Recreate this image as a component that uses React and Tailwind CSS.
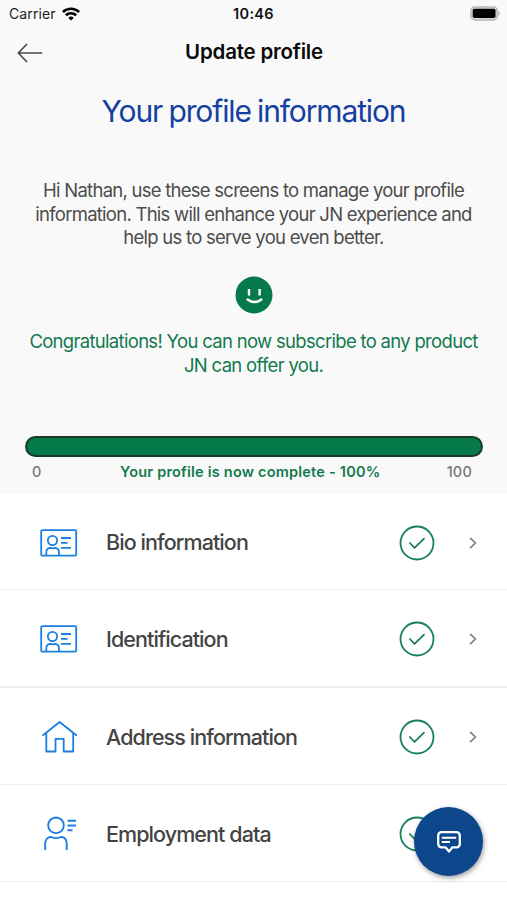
function WifiIcon() {
  return (
    <svg viewBox="0 0 18 14" className="h-[14px] w-[18px]" fill="none" stroke="#000" strokeWidth="2.6">
      <path d="M.9 5a11.6 11.6 0 0 1 16.2 0" />
      <path d="M3.9 8.3a7.3 7.3 0 0 1 10.2 0" />
      <path d="M9 13.6 6.3 10.9a3.9 3.9 0 0 1 5.4 0z" fill="#000" stroke="none" />
    </svg>
  );
}

function BatteryIcon() {
  return (
    <svg viewBox="0 0 31 15" className="h-[15px] w-[31px]">
      <rect x=".9" y=".9" width="26.4" height="13" rx="4" fill="#d8d8d8" stroke="#b8b8b8" strokeWidth="1.5" />
      <rect x="2.7" y="2.7" width="22.8" height="9.4" rx="1.8" fill="#000" />
      <path d="M28.4 5v4.8c2-.7 2-4.1 0-4.8z" fill="#b4b4b4" />
    </svg>
  );
}

function BackIcon() {
  return (
    <svg
      viewBox="0 0 26 20"
      className="h-[20px] w-[26px]"
      fill="none"
      stroke="#4a4a4a"
      strokeWidth="1.7"
      strokeLinecap="round"
      strokeLinejoin="round"
    >
      <path d="M9.5 1.5 1.3 10l8.2 8.5M1.3 10h23.2" />
    </svg>
  );
}

function SmileIcon() {
  return (
    <svg viewBox="0 0 38 38" className="h-[38px] w-[38px]" fill="none" stroke="#fff" strokeWidth="2.4" strokeLinecap="round">
      <circle cx="19" cy="19" r="18.5" fill="#05794a" stroke="none" />
      <path d="M14 13v6.4M24.6 13v6.4" strokeLinecap="butt" />
      <path d="M12.6 23.5c4 3.3 9.8 3.3 13.8 0" />
    </svg>
  );
}

function CardIcon() {
  return (
    <svg viewBox="0 0 38 28" className="h-[28px] w-[38px]" fill="none" stroke="#1c7fe0" strokeWidth="1.8">
      <rect x="1.2" y="1.2" width="35" height="25.4" rx="1" />
      <circle cx="12.5" cy="11.5" r="4.6" />
      <path d="M6.3 26.2v-2.7c0-3 1.8-4.6 4.2-4.6 1.2.6 3 .6 4 0 2.5 0 4.5 1.6 4.5 4.6v2.7" />
      <path d="M21 9h10M21 13.8h6.5M21 18.9h10" />
    </svg>
  );
}

function HomeIcon() {
  return (
    <svg
      viewBox="0 0 38 34"
      className="h-[34px] w-[38px]"
      fill="none"
      stroke="#1c7fe0"
      strokeWidth="1.8"
      strokeLinecap="round"
      strokeLinejoin="round"
    >
      <path d="M3 15.3 19.6 2l16.7 13.3" />
      <path d="M6.3 13.2v18.3h9.2V18.8h8.2v12.7h9.5V13.2" />
    </svg>
  );
}

function PersonIcon() {
  return (
    <svg viewBox="0 0 38 36" className="h-[36px] w-[38px]" fill="none" stroke="#1c7fe0" strokeWidth="1.9">
      <circle cx="16" cy="9.3" r="7.8" />
      <path d="M5.2 34v-6.2c0-4.2 2.4-6.8 6-6.8 3 1.4 6.6 1.4 9.6 0 3.6 0 5.9 2.6 5.9 6.8V34" />
      <path d="M27.5 4.7H36M27.5 9.5H36M27.5 14.3h5" />
    </svg>
  );
}

function CheckIcon() {
  return (
    <svg
      viewBox="0 0 36 36"
      className="h-[36px] w-[36px]"
      fill="none"
      stroke="#17805a"
      strokeWidth="1.8"
      strokeLinecap="round"
      strokeLinejoin="round"
    >
      <circle cx="18" cy="18" r="16.5" />
      <path d="m10.9 18 4.6 4.8 9.5-9.2" />
    </svg>
  );
}

function ChevronIcon() {
  return (
    <svg
      viewBox="0 0 10 14"
      className="h-[14px] w-[10px]"
      fill="none"
      stroke="#777"
      strokeWidth="1.6"
      strokeLinecap="round"
      strokeLinejoin="round"
    >
      <path d="m2.5 2.4 5 4.6-5 4.6" />
    </svg>
  );
}

function ChatIcon() {
  return (
    <svg viewBox="0 0 26 24" className="h-[24px] w-[26px]" fill="none" stroke="#fff" strokeWidth="2.3" strokeLinejoin="round">
      <path d="M5.5 2.2h15a3.3 3.3 0 0 1 3.300 3.300v8.500a3.300 3.300 0 0 1-3.300 3.300h-4L13 21.600l-3.500-4.300h-4A3.300 3.300 0 0 1 2.200 14V5.500a3.300 3.300 0 0 1 3.300-3.300z" />
      <path d="M5.800 7.800h14.400M5.800 11.900h8.200" strokeWidth="2" />
    </svg>
  );
}

const sections = [
  { label: 'Bio information', icon: CardIcon, row: 'h-[96px] border-b' },
  { label: 'Identification', icon: CardIcon, row: 'h-[98px] border-b-2' },
  { label: 'Address information', icon: HomeIcon, row: 'h-[97px] border-b' },
  { label: 'Employment data', icon: PersonIcon, row: 'h-[97px] border-b' },
];

export default function App() {
  return (
    <div className="relative h-[900px] w-[507px] overflow-hidden bg-white font-['Inter',sans-serif]">
      <div className="flex h-[494px] flex-col bg-[#f9f9f9]">
        <div className="grid h-[27px] grid-cols-[1fr_auto_1fr] items-center px-[6px] text-[14px] text-[#222]">
          <div className="flex items-center gap-[6px] pl-[3px] tracking-[0.1px]">
            <span>Carrier</span>
            <WifiIcon />
          </div>
          <span className="text-[14.5px] font-semibold tracking-[0.3px] text-[#111]">10:46</span>
          <div className="flex justify-end">
            <BatteryIcon />
          </div>
        </div>

        <header className="grid h-[50px] grid-cols-[60px_1fr_60px] items-center">
          <button type="button" aria-label="Back" className="pt-[2px] pl-[17px]">
            <BackIcon />
          </button>
          <h1 className="pt-px pl-px text-center text-[20.5px] font-semibold tracking-[-0.2px] text-[#0a0a0a]">
            Update profile
          </h1>
        </header>

        <h2 className="mt-[14px] text-center text-[30px] leading-[40px] tracking-[-1.14px] [word-spacing:-1px] text-[#1440a0]">
          Your profile information
        </h2>

        <p className="mt-[48px] whitespace-nowrap text-center text-[18.5px] leading-[23.5px] tracking-[-0.74px] text-[#4c4c4c]">
          Hi Nathan, use these screens to manage your profile
          <br />
          information. This will enhance your JN experience and
          <br />
          help us to serve you even better.
        </p>

        <div className="mt-[26.5px] flex justify-center">
          <SmileIcon />
        </div>

        <p className="mt-[16px] whitespace-nowrap text-center text-[18.5px] leading-[23.5px] tracking-[-0.69px] text-[#12794e]">
          Congratulations! You can now subscribe to any product
          <br />
          JN can offer you.
        </p>

        <div className="mt-[59px] mr-[24px] ml-[25px] h-[21px] shrink-0 rounded-full border-2 border-[#1b3a2a] bg-[#05794a]" />

        <div className="mt-[5px] flex items-center pr-[35px] pl-[32px] text-[14.5px] leading-[20px] font-medium tracking-[0.2px] text-[#777]">
          <span className="w-[88px]">0</span>
          <span className="flex-1 whitespace-nowrap font-semibold tracking-[0.22px] text-[#12794e]">
            Your profile is now complete - 100%
          </span>
          <span>100</span>
        </div>
      </div>

      <ul>
        {sections.map(({ label, icon: Icon, row }) => (
          <li key={label} className={`flex items-center border-[#ededed] pt-[2px] pr-[29.5px] pl-[40px] ${row}`}>
            <Icon />
            <span className="ml-[28px] flex-1 text-[21.5px] font-[450] tracking-[-0.92px] text-[#444]">{label}</span>
            <CheckIcon />
            <span className="ml-[33px]">
              <ChevronIcon />
            </span>
          </li>
        ))}
      </ul>

      <button
        type="button"
        aria-label="Open chat"
        className="absolute top-[807px] left-[414px] flex h-[69px] w-[69px] items-center justify-center rounded-full bg-[#0b478a] shadow-[1px_2px_5px_rgba(0,0,0,0.4)]"
      >
        <ChatIcon />
      </button>
    </div>
  );
}
